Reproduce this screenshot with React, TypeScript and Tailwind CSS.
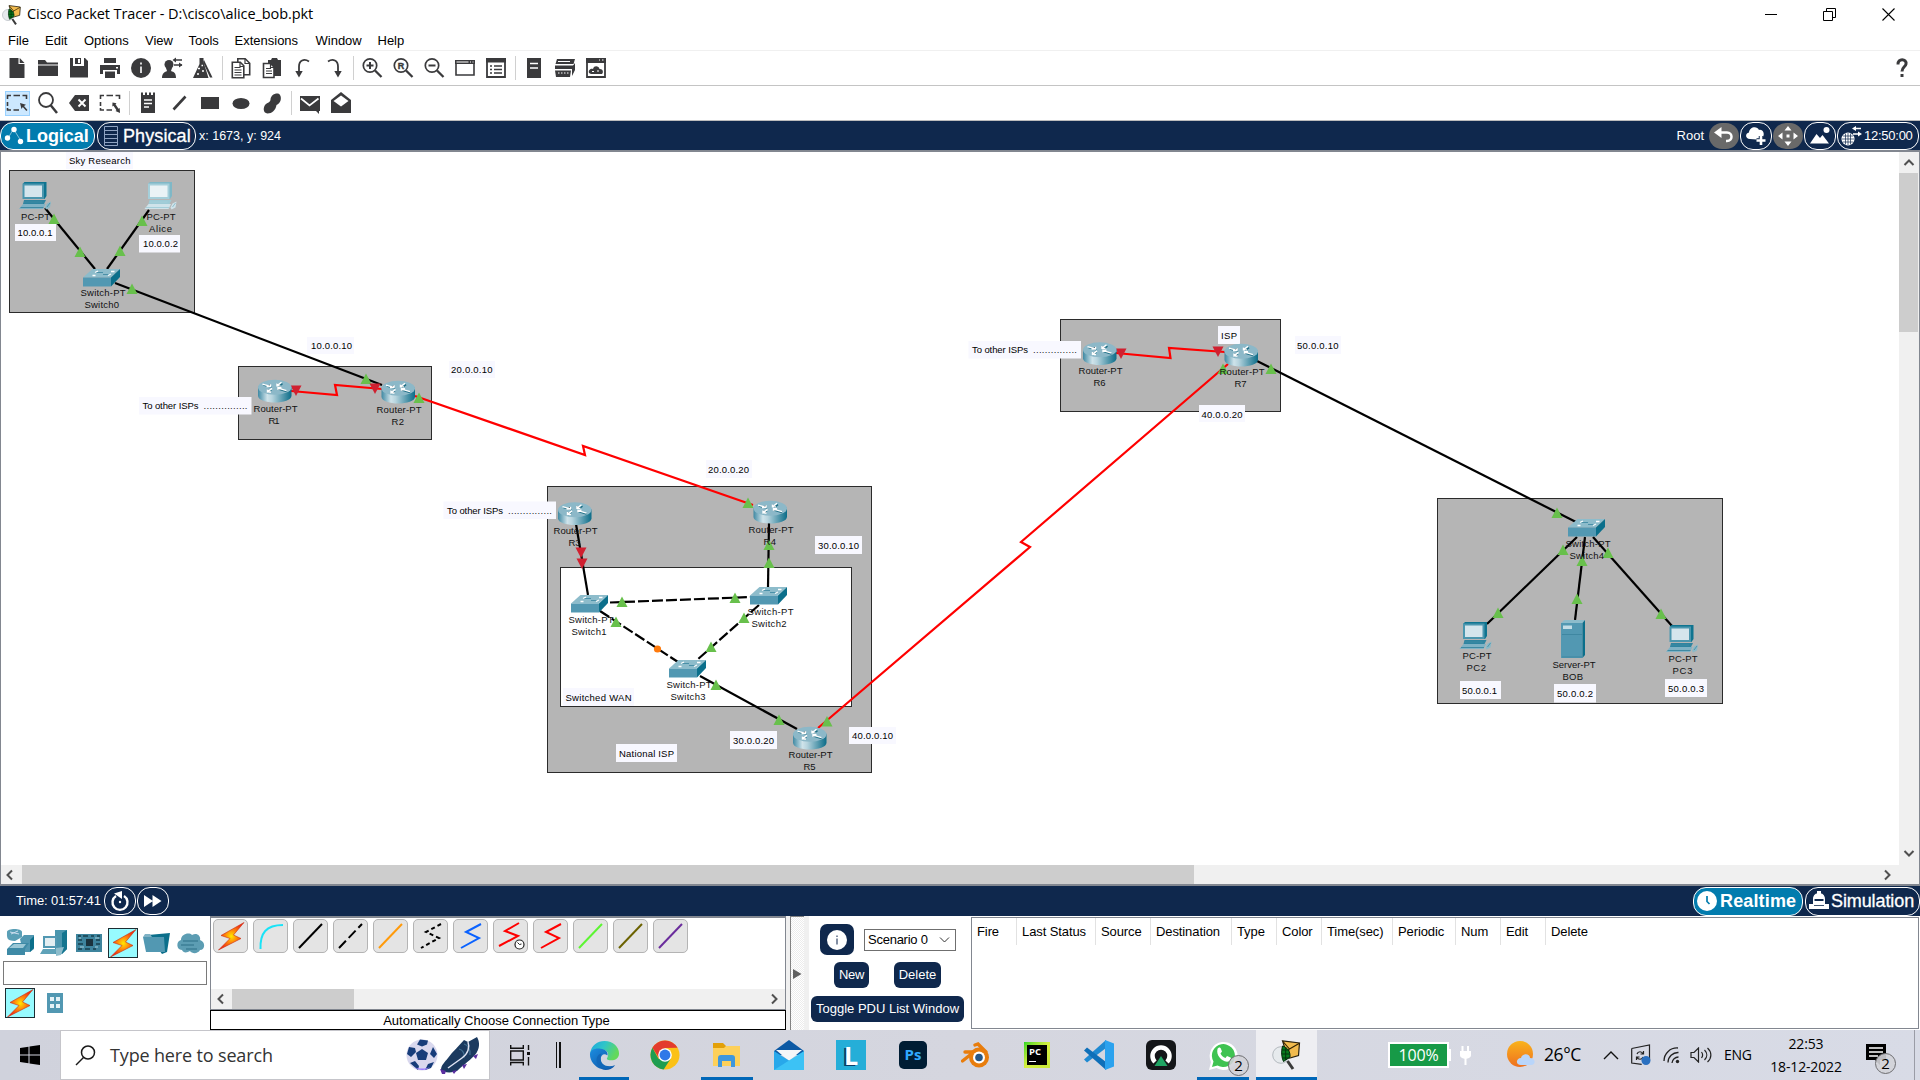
import React from "react";

const INK = "#3a3a3c";
const NAVY = "#0f284d";

/* ---------- small helpers ---------- */
type Kids = { children?: React.ReactNode };
const Ic = ({ children, w = 24, h = 24, box }: Kids & { w?: number; h?: number; box?: string }) => (
  <svg width={w} height={h} viewBox={box ?? `0 0 ${w} ${h}`} className="block shrink-0" fill="none">
    {children}
  </svg>
);
const Tool = ({ children, on }: Kids & { on?: boolean }) => (
  <div className="flex w-[31px] shrink-0 items-center justify-center">
    <div className={on ? "flex h-[25px] w-[25px] items-center justify-center border border-[#99d1ff] bg-[#cce8ff]" : ""}>{children}</div>
  </div>
);
const Sep = () => (
  <div className="flex w-[7px] shrink-0 justify-center">
    <div className="h-6 w-px bg-[#d0d0d0]" />
  </div>
);

/* ---------- toolbar icons ---------- */
const Mag = ({ inner }: { inner: string }) => (
  <Ic>
    <circle cx="10" cy="9.5" r="6.7" stroke={INK} strokeWidth="1.7" />
    <path d="M15 14.5l6.5 6.5" stroke={INK} strokeWidth="2.3" />
    {inner === "R" ? (
      <text x="10" y="12.8" textAnchor="middle" fontSize="9" fontWeight="700" fill={INK} stroke={INK} strokeWidth=".4" fontFamily="Liberation Sans, sans-serif">R</text>
    ) : (
      <path d={inner} stroke={INK} strokeWidth="2" />
    )}
  </Ic>
);
const topIcons: React.ReactNode[] = [
  <Ic><path d="M5 2h9v6h6v14H5z" fill={INK} transform="translate(-.5 0)" /><path d="M14.7 2l4.8 5h-4.8z" fill={INK} /></Ic>,
  <Ic><path d="M2 4h7l2 2.5h11v2H2zM2 9.5h20V20H2z" fill={INK} /></Ic>,
  <Ic><path d="M3 2h3v8h11V2h1l3 3v16.500H3z" fill={INK} /><path d="M8 2h6v6H8z" fill={INK} /><path d="M11 3h2v4h-2z" fill="#fff" /></Ic>,
  <Ic><path d="M6 2h12v5H6zM2 9h20v9h-3v-4H5v4H2zM7 15.500h10V22H7z" fill={INK} /><path d="M18 11h2v1.500h-2z" fill="#fff" /></Ic>,
  <Ic><circle cx="12" cy="12" r="10" fill={INK} /><path d="M12 10.500v6.500M12 6.500v2" stroke="#fff" strokeWidth="1.600" /></Ic>,
  <Ic><circle cx="9" cy="8.500" r="4.500" fill={INK} /><path d="M2 22c0-5 3-6 5-7l-1-3h6l-1 3c3 1 5 2 5 7z" fill={INK} /><path d="M14 4h8M14 9h8" stroke={INK} strokeWidth="1.500" /><path d="M16 1.500v5L12.500 4zM19 6.500v5l3.500-2.500z" fill={INK} /></Ic>,
  <Ic><path d="M8.500 2h4v4l5 16H2L8.500 8z" fill={INK} /><path d="M13 4l8.500 17.500H19L12 6z" fill={INK} /><path d="M7 12.500h2M11 15h2M6 18h2M10.500 9.500h1.500" stroke="#fff" strokeWidth="1.600" /></Ic>,
  null,
  <Ic><path d="M8.800 2.800h7.400l4.500 4.500v11.400H8.800z" stroke={INK} strokeWidth="1.600" /><path d="M3.300 6.300h8l3.500 3.500v12H3.300z" stroke={INK} fill="#fff" strokeWidth="1.600" /><path d="M5.500 11.500h6M5.500 14h7M5.500 16.500h7M5.500 19h7M11 6.500v4h4M16 3v4.500h4.500" stroke={INK} strokeWidth="1.200" /></Ic>,
  <Ic><path d="M8 4h3l1-2h5l1 2h3v16H8z" fill={INK} /><path d="M3.500 7.500h7l3.500 3.500v10.500H3.500z" stroke={INK} fill="#fff" strokeWidth="1.600" /><path d="M6 12.500h5M6 15h6M6 17.500h6M10.500 7.500v4h4" stroke={INK} strokeWidth="1.200" /></Ic>,
  <Ic><path d="M18 5.500c-5-3.500-10-1-10 5v6" stroke={INK} strokeWidth="1.800" /><path d="M4.300 15h7.400L8 21.500z" fill={INK} /></Ic>,
  <Ic><path d="M6 5.500c5-3.500 10-1 10 5v6" stroke={INK} strokeWidth="1.800" /><path d="M12.300 15h7.400L16 21.500z" fill={INK} /></Ic>,
  null,
  <Mag inner="M6.500 9.500h7M10 6v7" />,
  <Mag inner="R" />,
  <Mag inner="M6.500 9.500h7" />,
  <Ic><path d="M3 5h18v14H3z" stroke={INK} strokeWidth="1.600" /><path d="M2 4h20v4H2z" fill={INK} /><path d="M3.500 6h12M17 6h1M19.500 6h1" stroke="#fff" strokeWidth="1" /></Ic>,
  <Ic><path d="M3 3h18v18H3z" stroke={INK} strokeWidth="1.800" /><path d="M2 2h20v4.500H2z" fill={INK} /><path d="M6 10h2M10 10h8M6 13.500h2M10 13.500h8M6 17h2M10 17h8" stroke={INK} strokeWidth="1.700" /></Ic>,
  null,
  <Ic><path d="M5 2h14v20H5z" fill={INK} /><path d="M8 7.500h8M8 12h8" stroke="#fff" strokeWidth="1.500" /></Ic>,
  <Ic><path d="M4 3h18l-1.500 5H2.500z" fill={INK} /><path d="M2 9.500h19v3.500H2z" fill={INK} /><path d="M2 14.500h16l-1 6.500H3zM19 11l3-4v7l-3 6z" fill={INK} /><path d="M5 5.500h12M5 17h1.500M8 17h1.500M11 17h1.500M14 17h1.500" stroke="#fff" strokeWidth="1" /></Ic>,
  <Ic><path d="M3 3h18v18H3z" stroke={INK} strokeWidth="1.800" /><path d="M2 2h20v5H2z" fill={INK} /><path d="M15 4h1M18 4h1.500" stroke="#fff" strokeWidth="1.200" /><path d="M5 17c-1-3 2-5 4-4 1-4 6-3 6.500 0 3-.5 4.500 3 2.500 5H7z" fill={INK} /><path d="M8 15.500h2M13 15h2" stroke="#fff" /></Ic>,
];
const Marquee = ({ arrow }: { arrow: string }) => (
  <Ic>
    <path d="M2.500 8V4.500H6M8.500 4.500H15M17.500 4.500h4V8M2.500 11v4M2.500 17v2H6M8.500 19H14" stroke={INK} strokeWidth="1.600" />
    <path d={arrow} fill={INK} />
  </Ic>
);
const lowIcons: React.ReactNode[] = [
  <Marquee arrow="M15 12l6 1.800-2 1.200 3.500 4-1.200 1-3.500-4-1.300 2z" />,
  <Ic><circle cx="10" cy="9" r="7" stroke={INK} strokeWidth="1.800" /><path d="M14.500 14l6.500 8" stroke={INK} strokeWidth="2.500" /></Ic>,
  <Ic><path d="M2 12l6-8h14v16H8z" fill={INK} /><path d="M11.500 8.500l7 7M18.500 8.500l-7 7" stroke="#fff" strokeWidth="1.900" /></Ic>,
  <Marquee arrow="M14.500 11.500l4 .8-1 1 3 4.500 1.200-.8.3 5-4.500-2 1-.8-3-4.500-1.200.8z" />,
  null,
  <Ic><path d="M5 4h14v18H5zM5 1.500h2V5H5zM9 1.500h2V5H9zM13 1.500h2V5h-2zM17 1.500h2V5h-2z" fill={INK} /><path d="M8 9h8M8 12.500h8M8 16h5" stroke="#fff" strokeWidth="1.500" /></Ic>,
  <Ic><path d="M6.500 18.500l12-13" stroke={INK} strokeWidth="2.600" /></Ic>,
  <Ic><path d="M3 6h18v12H3z" fill={INK} /></Ic>,
  <Ic><ellipse cx="12" cy="12.500" rx="8.500" ry="5.500" fill={INK} /></Ic>,
  <Ic><path d="M10.500 8.500C11 3 18 1 20 4c2 3.500.5 8.500-3.500 10C15.500 19.500 12 22.500 7.500 22.500 2.500 22 3 15.500 6 13c2-1.500 4.200-1.500 4.500-4.500z" fill={INK} /></Ic>,
  null,
  <Ic><path d="M2 5h20v15H2z" fill={INK} /><path d="M3 7.500l8.500 7 9-7" stroke="#fff" strokeWidth="1.700" /><path d="M17 17h4v6l-3-3z" fill={INK} /></Ic>,
  <Ic><path d="M2 9l10-8 10 8v13H2z" fill={INK} /><path d="M4.500 10L12 4.500 19.500 10 12 15.500z" fill="#fff" /></Ic>,
];

/* ---------- network diagram ---------- */
const Router = ({ x, y }: { x: number; y: number }) => (
  <g transform={`translate(${x} ${y + 0.7})`}>
    <path d="M0 7v9c0 9 33.500 9 33.500 0V7z" fill="url(#cyl)" />
    <ellipse cx="16.750" cy="7.500" rx="16.750" ry="7.500" fill="#8cb8c8" />
    <g stroke="#1f6f86" strokeWidth="1.600" transform="translate(.5 .9)"><path d="M5 4.500l8 2.200M20 6l4-3M13 9l-4 3M20 8.500l8 2.300" /></g>
    <g stroke="#fff" strokeWidth="1.400"><path d="M4.500 4.500l8 2.200M12.500 4.500v2.300h-4M19 6l4.500-3.500M19 3.800v2.400h3.500M14 8.700l-4.500 3.500M9.500 9.800v2.500h3.500M20 8.500l8.500 2.500M23.500 8H20v2" /></g>
  </g>
);
const Switch = ({ x, y }: { x: number; y: number }) => (
  <g transform={`translate(${x} ${y})`}>
    <path d="M0 8.500L9.500 0H37l-9.500 8.500z" fill="#8dbccb" />
    <path d="M0 8.500h28v9H0z" fill="#5298b2" />
    <path d="M28 8.500L37 0v8l-9 9.500z" fill="#0b6f8b" />
    <path d="M12 3.500h8M20 5.500h8" stroke="#4a90a8" strokeWidth="1" />
    <path d="M12 3.500l3-1.500M28 2.500h3.500M9.500 6.500h3M25 6.500l3-1.500" stroke="#fff" strokeWidth="1.300" />
  </g>
);
const Pc = ({ x, y, pale }: { x: number; y: number; pale?: boolean }) => (
  <g transform={`translate(${x} ${y})`}>
    <path d="M4 1.500L5.500 0h22v14l-2 3H4z" fill={pale ? "#7fb8c7" : "#0f7490"} />
    <path d="M3.500 1.500h21.500V17H3.500z" fill={pale ? "#a5cfda" : "#4b96ae"} />
    <path d="M5.500 3.500h17.500v11.500H5.500z" fill={pale ? "#eaf3f6" : "#d5e5ec"} />
    <path d="M5 18h22l-2 4H4z" fill={pale ? "#9ecbd6" : "#2f84a0"} />
    <path d="M4 22h22.500L24 27H0z" fill={pale ? "#cfe3ea" : "#7fb2c5"} />
    <path d="M1.500 25.500h23M5 20h18" stroke={pale ? "#a5cfda" : "#3e8aa3"} strokeWidth="1" />
    <path d="M26 25.500l2-4 4-2-1 6-4 2z" fill={pale ? "#cfe3ea" : "#8ab9c8"} />
    <path d="M28 25l3-4" stroke={pale ? "#8fc0cd" : "#4f95ab"} />
  </g>
);
const Server = ({ x, y }: { x: number; y: number }) => (
  <g transform={`translate(${x} ${y})`}>
    <path d="M0 3l3.500-3H24l-2.500 3z" fill="#8dbccb" />
    <path d="M0 3h21.500v35H0z" fill="#5298b2" />
    <path d="M21.500 3L24 0v35l-2.500 3z" fill="#0b6f8b" />
    <path d="M2 5.500h9v3.500H2z" fill="#c3dde6" />
    <path d="M1 14.500h20M1 37h20" stroke="#3f87a1" />
  </g>
);

const zones = [
  [9.5, 170.5, 185, 142], [238.5, 366.5, 193, 73], [547.5, 486.5, 324, 286],
  [1060.5, 319.5, 220, 92], [1437.5, 498.5, 285, 205],
];
type Note = [number, number, number, number, string, number, number, number];
/* left, top, width, height, text, text-left, baseline, text-width */
const notes: Note[] = [
  [66, 152, 67, 17, "Sky Research", 69, 164, 61.5],
  [15, 224, 41, 17, "10.0.0.1", 17.5, 236, 35],
  [139, 235, 41, 17.5, "10.0.0.2", 143, 247, 35],
  [307, 337, 47, 17, "10.0.0.10", 311, 349, 41],
  [449, 361, 46, 17, "20.0.0.10", 451, 373, 41.5],
  [706, 460, 46, 18, "20.0.0.20", 708, 473, 41],
  [815, 536, 47, 18, "30.0.0.10", 818, 549, 41],
  [563, 688, 71, 18, "Switched WAN", 565.5, 701, 66],
  [730, 731, 47, 18, "30.0.0.20", 733, 744, 41],
  [849, 727, 47, 17, "40.0.0.10", 852, 739, 41],
  [616, 744, 61, 18, "National ISP", 619, 757, 55],
  [1218, 326, 22, 18, "ISP", 1221, 339, 16],
  [1295, 336, 46, 18, "50.0.0.10", 1297, 349, 41.5],
  [1199, 405, 46, 17, "40.0.0.20", 1201.5, 418, 41],
  [1460, 681, 41, 18, "50.0.0.1", 1462, 694, 35],
  [1554, 684, 42, 18.5, "50.0.0.2", 1557, 697, 36],
  [1665, 679, 42, 18, "50.0.0.3", 1668, 692, 36],
];
const ispNotes = [[139, 397], [443.5, 501.5], [968.5, 341]];
type Lab = [string, number, number, number];
const labels: Lab[] = [
  ["PC-PT", 21, 220, 29], ["PC-PT", 146.5, 220, 29], ["Alice", 149, 232, 23],
  ["Switch-PT", 80.5, 296, 45], ["Switch0", 84.5, 308, 34.5],
  ["Router-PT", 253.5, 412, 44], ["R1", 268.5, 424, 11],
  ["Router-PT", 376.5, 413, 45], ["R2", 391.5, 425, 12.5],
  ["Router-PT", 553.5, 534, 44], ["R3", 568.5, 546, 12],
  ["Router-PT", 748.5, 533, 45], ["R4", 763.5, 545, 12.5],
  ["Router-PT", 788.5, 758, 44], ["R5", 803.5, 770, 12],
  ["Router-PT", 1078.5, 374, 44], ["R6", 1093.5, 386, 12],
  ["Router-PT", 1219.5, 375, 45], ["R7", 1234.5, 387, 12],
  ["Switch-PT", 568.5, 623, 45], ["Switch1", 571.5, 635, 35],
  ["Switch-PT", 747.5, 615, 46], ["Switch2", 751.5, 627, 35],
  ["Switch-PT", 666.5, 688, 45], ["Switch3", 670.5, 700, 35],
  ["Switch-PT", 1565.5, 547, 45], ["Switch4", 1569.5, 559, 34.5],
  ["PC-PT", 1462.5, 659, 29], ["PC2", 1466.5, 671, 19.5],
  ["Server-PT", 1552.5, 668, 43], ["BOB", 1562.5, 680, 20.5],
  ["PC-PT", 1668.5, 662, 29], ["PC3", 1672.5, 674, 20],
];
const wires = [
  "M45 208L95 269", "M149 210L107 269", "M115 283L382 385", "M576 524L588 595", "M769 523L768 587",
  "M700 676L797 729", "M1257 361L1576 522", "M1577 537L1487 624", "M1585 537L1575 620", "M1593 537L1672 626",
];
const dashed = ["M610 602.500L752 597", "M600 611L678 662", "M759 605L697 660"];
const serial = [
  "M291 391L337 395L335 385L382 389", "M415 396L585 455L583 446L753 505",
  "M818 728L1030 547L1021 542L1228 364", "M1116 353L1170.500 358L1169 348L1225 352",
];
const up = [
  [54, 219], [80, 252], [142, 221], [120, 251], [132, 289], [366, 379], [419, 398], [748, 503], [769, 545], [769, 563],
  [622, 602], [735, 598], [616, 622], [744, 618], [711, 647], [716, 685], [779, 720], [827, 721.5], [1223, 369],
  [1271, 369], [1557, 513], [1563, 550], [1498, 613], [1582, 561], [1577, 599], [1608, 553], [1661, 614],
];
const down = [[296, 390], [375, 388], [581, 552], [582, 563], [1121, 353], [1218, 351]];

const Diagram = () => (
  <svg width="1898" height="713" viewBox="1 152 1898 713" className="block" fontFamily="Liberation Sans, Arial, sans-serif" fontSize="9.5">
    <defs>
      <linearGradient id="cyl">
        <stop offset="0" stopColor="#3f89a3" /><stop offset=".28" stopColor="#cfe3ea" /><stop offset=".42" stopColor="#b7d4de" /><stop offset="1" stopColor="#0b6c88" />
      </linearGradient>
    </defs>
    {zones.map(([x, y, w, h]) => <rect key={x} x={x} y={y} width={w} height={h} fill="#b5b5b5" stroke="#2b2b2b" />)}
    <rect x="560.5" y="567.5" width="291" height="139" fill="#fff" stroke="#2b2b2b" />
    {notes.map(([x, y, w, h, t, tx, ty, tw]) => (
      <g key={t}>
        <rect x={x} y={y} width={w} height={h} fill="#f8f8ff" />
        <text x={tx} y={ty} textLength={tw} fill="#000">{t}</text>
      </g>
    ))}
    {ispNotes.map(([x, y]) => (
      <g key={x}>
        <rect x={x} y={y} width="112.5" height="17.5" fill="#f8f8ff" />
        <text x={x + 3.5} y={y + 12} textLength="56">To other ISPs</text>
        <text x={x + 64.5} y={y + 12} textLength="44" fill="#222">...............</text>
      </g>
    ))}
    <g stroke="#000" strokeWidth="2.200" fill="none">
      {wires.map((d) => <path key={d} d={d} />)}
      {dashed.map((d) => <path key={d} d={d} strokeDasharray="11 3" />)}
    </g>
    <g stroke="#f00" strokeWidth="2.200" fill="none">{serial.map((d) => <path key={d} d={d} />)}</g>
    {up.map(([x, y], i) => <path key={i} d={`M${x} ${y - 5.5}l5.500 10.500h-11z`} fill="#68c04c" />)}
    {down.map(([x, y], i) => <path key={i} d={`M${x - 5.5} ${y - 4.5}h11l-5.500 10.500z`} fill="#d02030" />)}
    <circle cx="657.5" cy="649" r="3.600" fill="#ff7a0c" />
    <Pc x={19} y={182} /><Pc x={144.500} y={182} pale />
    <Pc x={1459.5} y={622} /><Pc x={1666} y={625} />
    <Server x={1561} y={620} />
    <Switch x={83} y={269} /><Switch x={571} y={595} /><Switch x={750} y={587} /><Switch x={669} y={660} /><Switch x={1568} y={519} />
    <Router x={258} y={379} /><Router x={381.5} y={380} /><Router x={558} y={501.5} /><Router x={753.5} y={500} /><Router x={793} y={726} />
    <Router x={1083} y={341.5} /><Router x={1224.5} y={343} />
    <g fill="#111">{labels.map(([t, x, y, w], i) => <text key={i} x={x} y={y} textLength={w}>{t}</text>)}</g>
  </svg>
);

/* ---------- scroll arrows ---------- */
const Chev = ({ d }: { d: string }) => (
  <Ic w={12} h={12}><path d={d} stroke="#505050" strokeWidth="2" /></Ic>
);
const LEFT = "M8 1.500L3.500 6L8 10.500", RIGHT = "M4 1.500L8.500 6L4 10.500", UP = "M1.500 8L6 3.500L10.500 8", DOWN = "M1.500 4L6 8.500L10.500 4";

/* ---------- bottom panel ---------- */
const Bolt = () => (
  <Ic w={28} h={30}>
    <defs><radialGradient id="bolt"><stop offset="0" stopColor="#ffe900" /><stop offset=".45" stopColor="#ff8a0a" /><stop offset="1" stopColor="#f03010" /></radialGradient></defs>
    <path d="M27 1.500L4 14.500l9 3L1.500 29 24 17.500l-7.500-3.500z" fill="url(#bolt)" stroke="#c92a12" strokeWidth=".6" />
  </Ic>
);
const BoltBox = () => <div className="flex h-[30px] w-[30px] items-center justify-center border border-[#1c2d33] bg-[#97fbff]"><Bolt /></div>;
const stroke = (d: string, c: string, dash?: string) => (
  <Ic w={28} h={30}><path d={d} stroke={c} strokeWidth="2" strokeDasharray={dash} /></Ic>
);
const DIAG = "M2 27L25 3", ZIG = "M24 3L9 11L22 17L4 27";
const cables: React.ReactNode[] = [
  <Bolt />,
  stroke("M3.500 28C3 12 9 4 26 4", "#19e3f7"),
  stroke(DIAG, "#000"),
  stroke(DIAG, "#000", "10 4"),
  stroke(DIAG, "#ff9a0a"),
  stroke(ZIG, "#000", "4 3"),
  stroke(ZIG, "#0a62ff"),
  <Ic w={28} h={30}><path d="M22 2L8 10L21 15L2 25" stroke="#f00" strokeWidth="2" /><circle cx="22.500" cy="23.500" r="4.500" fill="#fff" stroke="#222" strokeWidth="1.200" /><path d="M20.500 21.500l2 2 2-.5" stroke="#222" /></Ic>,
  stroke(ZIG, "#f00"),
  stroke(DIAG, "#5cf532"),
  stroke(DIAG, "#6b6200"),
  stroke(DIAG, "#6a2c9c"),
];
const Btn = ({ children, cls }: Kids & { cls: string }) => (
  <div className={`flex h-[26px] items-center justify-center rounded-[6px] bg-[#0f284d] text-[13px] text-white ${cls}`}>{children}</div>
);
const heads: [string, string][] = [
  ["Fire", "w-[45px]"], ["Last Status", "w-[79px]"], ["Source", "w-[55px]"], ["Destination", "w-[81px]"], ["Type", "w-[45px]"],
  ["Color", "w-[45px]"], ["Time(sec)", "w-[71px]"], ["Periodic", "w-[63px]"], ["Num", "w-[45px]"], ["Edit", "w-[45px]"], ["Delete", "w-[60px]"],
];

/* ---------- app mark ---------- */
const AppMark = ({ s }: { s: number }) => (
  <Ic w={s} h={s} box="0 0 30 30">
    <path d="M10.500.8L27.500 3l-1 12.500-10.500 3z" fill="#f2bb4e" stroke="#2a2210" strokeWidth="1.200" />
    <path d="M11 1.500l6.500 7.500L27 3.500M17 9l-1 8" stroke="#332200" strokeWidth="1.100" />
    <circle cx="9" cy="15" r="8.300" fill="#e6eaed" stroke="#b4babf" />
    <path d="M10.500 6c5 1.500 8 5.500 7.500 11l-6.500 4.500c-2-4-2.500-10-1-15.500z" fill="#067a1c" stroke="#032a0a" />
    <path d="M10 10h7M9.500 14h8.500M10.500 18h6.500M13.700 7.500v12.500" stroke="#03330c" />
    <path d="M15.500 21l5.500 8" stroke="#3a3a3a" strokeWidth="3" />
  </Ic>
);

/* ---------- taskbar ---------- */
const Task = ({ children, w, open, on }: Kids & { w: string; open?: boolean; on?: boolean }) => (
  <div className={`relative flex h-[50px] shrink-0 items-center justify-center ${w} ${on ? "bg-[#eeeef2]" : ""}`}>
    {children}
    {open && <div className={`absolute bottom-0 h-[3px] bg-[#0067b8] ${on ? "inset-x-0" : "inset-x-[5px]"}`} />}
  </div>
);
const Badge = ({ cls }: { cls: string }) => (
  <div className={`absolute flex h-[21px] w-[21px] items-center justify-center rounded-full border border-[#6d6d70] bg-[#d3d3d8]/90 text-[15px] font-medium leading-none text-black ${cls}`}>2</div>
);
const UI = "font-['Open_Sans','Noto_Sans',sans-serif]";

export default function App() {
  return (
    <div className="flex h-[1080px] w-[1920px] flex-col overflow-hidden bg-white font-['Liberation_Sans',Arial,sans-serif] text-[13px] text-black">
      {/* title bar */}
      <div className="flex h-[30px] shrink-0 items-center">
        <div className="flex w-[27px] justify-center pr-1"><AppMark s={20} /></div>
        <div className={`${UI} pb-px text-[14.5px] leading-none tracking-[-0.08px]`}>Cisco Packet Tracer - D:\cisco\alice_bob.pkt</div>
        <div className="ml-auto flex items-center pb-[2px] pr-[25px]">
          <Ic w={13} h={13}><path d="M0 6.500h12" stroke="#000" /></Ic>
          <div className="ml-[45px] mr-[46px]"><Ic w={13} h={13}><path d="M.5 3.500h9v9h-9zM3.500 3.500v-3h9v9h-3" stroke="#000" /></Ic></div>
          <Ic w={13} h={13}><path d="M.5.5l12 12M12.500.5l-12 12" stroke="#000" strokeWidth="1.100" /></Ic>
        </div>
      </div>
      {/* menu */}
      <div className="flex h-[21px] shrink-0 items-center border-b border-[#f0f0f0] pl-2 leading-none">
        <div className="w-[37px]">File</div><div className="w-[39px]">Edit</div><div className="w-[61px]">Options</div><div className="w-[43.500px]">View</div>
        <div className="w-[46px]">Tools</div><div className="w-[81px]">Extensions</div><div className="w-[62px]">Window</div><div>Help</div>
      </div>
      <div className="flex h-[35px] shrink-0 items-center border-b border-[#c4c4c4] pl-[1.5px]">
        {topIcons.map((n, i) => (n ? <Tool key={i}>{n}</Tool> : <Sep key={i} />))}
        <div className="ml-auto pr-[9px]">
          <Ic w={18} h={24}><path d="M5 8.500C4.500 2 14 2.500 13 8c-.5 3-4 3-4 7.500" stroke={INK} strokeWidth="3" /><path d="M7.500 18h3v3h-3z" fill={INK} /></Ic>
        </div>
      </div>
      <div className="flex h-[35px] shrink-0 items-center border-b border-[#bdbdbd] pl-[1.5px]">
        {lowIcons.map((n, i) => (n ? <Tool key={i} on={i === 0}>{n}</Tool> : <Sep key={i} />))}
      </div>
      {/* workspace bar */}
      <div className="flex h-[31px] shrink-0 items-center border-b-2 border-[#828790] bg-[#0f284d] text-white">
        <div className="flex h-[28px] w-[95px] shrink-0 items-center rounded-[13px] border border-white bg-[#027cae] pl-[3px] text-[18px] font-bold">
          <Ic w={20} h={22}><path d="M3.500 14L9.500 4L17 16" stroke="#d7edf5" strokeWidth="1" strokeOpacity=".6" /><circle cx="10" cy="4.500" r="2.700" fill="#fff" /><circle cx="3.500" cy="13" r="2.700" fill="#fff" /><circle cx="16.500" cy="16.500" r="2.700" fill="#fff" /></Ic>
          <span className="ml-[2px] pt-[2px] tracking-[-0.050px]">Logical</span>
        </div>
        <div className="ml-[2px] flex h-[28px] w-[99px] shrink-0 items-center rounded-[13px] border border-white pl-[6px] text-[18px]">
          <Ic w={14} h={20}><path d="M.5.5h13v19H.5zM1 4.500h12M1 8.500h12M1 12.500h12M1 16.500h12" stroke="#8fa3c2" /></Ic>
          <span className="ml-[5px] pt-[2px] tracking-[0.1px] [-webkit-text-stroke:0.3px_white]">Physical</span>
        </div>
        <div className="ml-[3px] pt-[2px] text-[12.500px]">x: 1673, y: 924</div>
        <div className="ml-auto flex items-center">
          <span className="mr-[5px] pt-px text-[13px]">Root</span>
          <div className="mr-px flex h-[26px] w-[30px] items-center justify-center rounded-[13px] bg-[#696969]">
            <Ic w={22} h={20}><path d="M5 6.500h9c6 0 6 8.500 0 8.500h-1" stroke="#fff" strokeWidth="2.500" /><path d="M1 6.500L8.500 1v11z" fill="#fff" /></Ic>
          </div>
          <div className="mr-px flex h-[28px] w-[32px] items-center justify-center rounded-[13px] border border-white">
            <Ic w={22} h={22}><path d="M5 14c-5 0-5-6-1-6.500C4 2 12 0 14 5c4-1 6 4 4 7v3z" fill="#fff" /><path d="M16 11v9M11.500 15.500h9" stroke={NAVY} strokeWidth="4.500" /><path d="M16 11v9M11.500 15.500h9" stroke="#fff" strokeWidth="2.600" /></Ic>
          </div>
          <div className="mr-px flex h-[26px] w-[30px] items-center justify-center rounded-[13px] bg-[#696969]">
            <Ic w={20} h={20}><path d="M10 0l3.500 4.500h-7zM10 20l3.500-4.500h-7zM0 10l4.500-3.500v7zM20 10l-4.500-3.500v7zM8.500 8.500h3v3h-3z" fill="#fff" /></Ic>
          </div>
          <div className="mr-px flex h-[28px] w-[32px] items-center justify-center rounded-[13px] border border-white">
            <Ic w={20} h={18}><path d="M0 16.500L6.500 7l3.500 4 2.500-3 6.500 8.500z" fill="#fff" /><circle cx="16.500" cy="3" r="3" fill="#fff" /></Ic>
          </div>
          <div className="mr-px flex h-[28px] w-[82px] items-center rounded-[13px] border border-white pl-[3px] text-[13px]">
            <Ic w={22} h={22}><circle cx="7" cy="14" r="6.500" fill="#fff" /><path d="M1 14h12M7 8v12M2 11h10M2 17h10M4.500 8.500v11M9.500 8.500v11" stroke={NAVY} strokeWidth=".7" /><path d="M13 3.500h7M12 9h7" stroke="#fff" strokeWidth="1.500" /><path d="M15 1v5l-4-2.500zM17 6.500v5l4-2.500z" fill="#fff" /></Ic>
            <span className="ml-px pt-px tracking-[-0.25px]">12:50:00</span>
          </div>
        </div>
      </div>
      {/* canvas */}
      <div className="flex h-[734px] shrink-0 flex-col border-x border-b-2 border-[#828790]">
        <div className="flex h-[713px]">
          <Diagram />
          <div className="flex w-5 flex-col items-center justify-between bg-[#f0f0f0] pb-[6px]">
            <div className="flex w-full flex-col items-center">
              <div className="flex h-[21px] items-center"><Chev d={UP} /></div>
              <div className="h-[159px] w-[19px] self-start bg-[#cdcdcd]" />
            </div>
            <Chev d={DOWN} />
          </div>
        </div>
        <div className="flex h-[19px] items-center bg-[#f0f0f0]">
          <div className="flex w-[21px] pl-[3px]"><Chev d={LEFT} /></div>
          <div className="h-[19px] w-[1172px] bg-[#cdcdcd]" />
          <div className="ml-auto mr-[26px]"><Chev d={RIGHT} /></div>
        </div>
      </div>
      {/* time bar */}
      <div className="flex h-[30px] shrink-0 items-center bg-[#0f284d] pl-[16px] text-[13px] text-white">
        <span className="w-[88px] tracking-[-0.1px]">Time: 01:57:41</span>
        <div className="flex h-[28px] w-[32px] items-center justify-center rounded-[13px] border border-white">
          <Ic w={20} h={22}><path d="M6 6a7.500 7.500 0 1 0 8 0" stroke="#fff" strokeWidth="2.400" /><path d="M4 3.500L12 1v8z" fill="#fff" /><circle cx="10" cy="12" r="1.200" fill="#fff" /></Ic>
        </div>
        <div className="ml-[1px] flex h-[28px] w-[32px] items-center justify-center rounded-[13px] border border-white">
          <Ic w={18} h={14}><path d="M0 1l9 6-9 6zM8.500 1l9 6-9 6z" fill="#fff" /></Ic>
        </div>
        <div className="ml-auto flex h-[29px] w-[110px] items-center rounded-[13px] border border-white bg-[#027cae] pl-[3px] text-[18px] font-bold">
          <Ic w={20} h={20}><circle cx="10" cy="10" r="10" fill="#fff" /><path d="M10 5v5.500l2.500 2.500" stroke="#027cae" strokeWidth="1.700" /></Ic>
          <span className="ml-[3px] tracking-[0.15px]">Realtime</span>
        </div>
        <div className="ml-[2px] flex h-[29px] w-[115px] items-center rounded-[13px] border border-white pl-[3px] text-[18px]">
          <Ic w={20} h={20}><path d="M4 8c0-8 12-8 12 0v5H4zM4 13h12v5H4zM0 13h4v5H0zM16 13h4v5h-4zM8 0h4v3H8z" fill="#fff" /><path d="M5.500 9h9" stroke={NAVY} strokeWidth="2" /><path d="M5 14.500h10" stroke={NAVY} strokeWidth=".8" /></Ic>
          <span className="ml-[2px] tracking-[-0.1px] [-webkit-text-stroke:0.3px_white]">Simulation</span>
        </div>
      </div>
      {/* device and PDU panels */}
      <div className="flex h-[114px] shrink-0 bg-[#f0f0f0]">
        <div className="w-[210px] shrink-0 bg-white">
          <div className="flex h-[42px] items-end gap-[5px] pl-[5px]">
            <Ic w={30} h={30}><path d="M2 4c0-4 15-4 15 0v5l-7 4c-9 0-8-4-8-9z" fill="#5a9fb6" /><path d="M5 4l9 2M13 3L6 6" stroke="#cde" /><path d="M15 11l4-4h10v14l-4 3h-7z" fill="#5298b2" /><path d="M2 21l6-6h16l-4 6v6H2z" fill="#3e8aa6" /><path d="M4 20l5-4h12l-3 4z" fill="#9cc8d6" /><path d="M25 12l4-4v12l-4 4z" fill="#0b6f8b" /></Ic>
            <Ic w={28} h={30}><path d="M15 2h12v19l-5 5h-7z" fill="#4b96ae" /><path d="M22 5l5-3v19l-5 5z" fill="#14758f" /><path d="M3 8h14v12H3z" fill="#5298b2" /><path d="M5 10h10v8H5z" fill="#e3eef2" /><path d="M3 21h14l-2 5H0z" fill="#5fa2b8" /><path d="M16 20l8-1-3 8-5 1z" fill="#8dbccb" /></Ic>
            <div className="ml-[2px]"><Ic w={28} h={30}><path d="M1 6h26v18H1z" fill="#3e849d" /><path d="M11 11h7v7h-7z" fill="#1b323c" /><path d="M3 8h3M8 8h5M16 8h3M22 8h3M3 12h4M3 16h5M3 21h4M10 21h5M18 21h3M21 12h4M21 16h4" stroke="#173f4d" strokeWidth="1.500" /><path d="M4 10h2M20 10h4M5 19h4M20 19h3" stroke="#a9d0dc" /></Ic></div>
            <BoltBox />
            <Ic w={28} h={30}><path d="M5 7l22-2-3 19-5 2z" fill="#0b6f8b" /><path d="M0 9h21l1 15H3z" fill="#5298b2" /><path d="M0 9l2-3h5l2 3z" fill="#7fb2c5" /></Ic>
            <div className="ml-[1px]"><Ic w={28} h={30}><path d="M5 22C-1 22-1 13 4 12 4 6 12 4 15 7c5-3 9 1 8 5 6 2 5 10 0 10-2 4-8 4-10 1-3 2-7 2-8-1z" fill="#5c9db3" /><path d="M6 13h15M4 17h13M9 21h11" stroke="#3c7f97" strokeWidth="1.500" /></Ic></div>
          </div>
          <div className="ml-[3px] mt-[3px] h-[24px] w-[204px] border-[1.500px] border-[#7a7a7a]" />
          <div className="mt-[3px] flex items-center gap-[11px] pl-[5px]">
            <BoltBox />
            <Ic w={18} h={22}><path d="M1 1h16v20H1z" fill="#5298b2" /><path d="M4 5h4v4H4zM10 5h4v4h-4zM4 12h4v4H4zM10 12h4v4h-4z" fill="#e6f2f6" /></Ic>
          </div>
        </div>
        <div className="flex w-[576px] shrink-0 flex-col">
          <div className="flex h-[94px] flex-col justify-between border-x border-t-2 border-b border-[#828790] bg-white">
            <div className="flex gap-[5px] pl-[2px] pt-[1px]">
              {cables.map((c, i) => (
                <div key={i} className="flex h-[34px] w-[35px] shrink-0 items-center justify-center rounded-[5px] border border-[#b4b4b4] bg-[#e4e4e4]">{c}</div>
              ))}
            </div>
            <div className="flex h-[20px] items-center bg-[#f0f0f0]">
              <div className="flex w-[21px] pl-[4px]"><Chev d={LEFT} /></div>
              <div className="h-[20px] w-[122px] bg-[#cdcdcd]" />
              <div className="ml-auto mr-[5px]"><Chev d={RIGHT} /></div>
            </div>
          </div>
          <div className="flex h-[20px] items-center justify-center border border-black bg-white pr-[3px] text-[13px] leading-none">Automatically Choose Connection Type</div>
        </div>
        <div className="ml-1 flex w-[14px] items-center border-l border-t border-[#828282] bg-[repeating-conic-gradient(#ffffff_0_25%,#ececec_0_50%)] bg-[size:2px_2px] pl-[2px]">
          <Ic w={9} h={10}><path d="M0 0l8.500 5L0 10z" fill="#606060" /></Ic>
        </div>
        <div className="ml-[5px] flex flex-col bg-white pl-[2px]">
          <div className="flex items-center pl-[9px] pt-[8px]">
            <div className="flex h-[31px] w-[34px] items-center justify-center rounded-[7px] bg-[#0f284d]">
              <Ic w={20} h={20}><circle cx="10" cy="10" r="10" fill="#fff" /><path d="M10 8.500v6M10 5.500v1.500" stroke="#5a6a85" strokeWidth="1.500" /></Ic>
            </div>
            <div className="ml-[10px] flex h-[22px] w-[92px] items-center border border-[#6f6f6f] pl-[3px] text-[13px] tracking-[-0.25px]">
              Scenario 0
              <span className="ml-auto mr-[5px]"><Ic w={11} h={8}><path d="M1 1.500l4.500 4.500L10 1.500" stroke="#333" /></Ic></span>
            </div>
          </div>
          <div className="mt-[7px] flex gap-[25px] pl-[23px]"><Btn cls="w-[35px] tracking-[-0.3px]">New</Btn><Btn cls="w-[47px]">Delete</Btn></div>
          <Btn cls="mt-[8px] w-[153px]">Toggle PDU List Window</Btn>
        </div>
        <div className="flex w-[7px] shrink-0 bg-white" />
        <div className="flex min-w-0 flex-1 flex-col bg-white pb-px pt-px">
          <div className="flex flex-1 border border-[#828790]">
            {heads.map(([t, w], i) => (
              <div key={t} className={`h-[27px] shrink-0 pl-[5px] pt-[4px] tracking-[-0.1px] ${w} ${i < 10 ? "border-r border-[#e2e2e2]" : ""}`}>{t}</div>
            ))}
          </div>
        </div>
        <div className="w-[1px] bg-white" />
      </div>
      {/* taskbar */}
      <div className={`flex h-[50px] shrink-0 items-center bg-gradient-to-r from-[#d0d2dc] via-[#d5d6df] to-[#d8dbe6] ${UI}`}>
        <Task w="w-[60px]"><Ic w={20} h={20}><path d="M0 3l8.500-1.200V9.500H0zM9.500 1.600L20 0v9.500H9.500zM0 10.500h8.500v7.700L0 17zM9.500 10.500H20V20L9.500 18.400z" fill="#000" /></Ic></Task>
        <div className="flex h-[50px] w-[430px] shrink-0 items-center border border-[#c5c5ca] bg-white pl-[14px]">
          <Ic w={21} h={21}><circle cx="13" cy="7.500" r="6.500" stroke="#1a1a1a" strokeWidth="1.500" /><path d="M8.500 12.500L1 20" stroke="#1a1a1a" strokeWidth="1.500" /></Ic>
          <span className="ml-[14px] whitespace-nowrap text-[18px] tracking-[-0.150px] text-[#333]">Type here to search</span>
          <div className="ml-auto mr-[9px] flex items-center">
            <Ic w={32} h={34}>
              <circle cx="16" cy="17" r="15.500" fill="#d9d8ee" />
              <path d="M16 11l6 4-2 7h-8l-2-7zM3 9l6 1 1 4-5 5-4-3zM14 1.500l8 1-1 4-5 2-5-2zM27 9l4 7-3 4-4-4zM4 25l5-2 4 5-1 4zM22 26l6-2-3 6-6 2z" fill="#173d7a" />
              <path d="M8 29c5 4 12 4 16 0-4 2-12 2-16 0z" fill="#9a7bff" />
            </Ic>
            <Ic w={42} h={38}>
              <path d="M26 4l4 2 9-5c3 5 3 12-2 18-7 7-14 12-18 16-4 2-14 2-16-1 0-5 4-8 7-12 5-7 11-12 16-18z" fill="#1b3a5f" />
              <path d="M26 8c4 1 7 6 6 11M21 13c4 1 6 5 5 9" stroke="#3f6d8f" strokeWidth="1.200" />
              <path d="M30 6c2 5 0 12-6 16L10 32" stroke="#dfe4f3" strokeWidth="1.500" />
              <path d="M2 33l2 5h3l1-3M14 35l2 3 3-4M24 29l2 4 3-5M35 20l3 3 2-5" fill="#5a2ea0" />
            </Ic>
          </div>
        </div>
        <Task w="w-[60px]"><Ic w={21} h={21}><path d="M.7 0v3.300h12.600V0M.7 6h12.600v9H.7zM.7 20.500v-3h12.600v3M18.500 0v5M18.500 12v8.500" stroke="#111" strokeWidth="1.400" /><path d="M17 7h3v3h-3z" fill="#111" /></Ic></Task>
        <div className="flex w-[24px] justify-center gap-[2px]"><div className="ml-[-8px] h-[26px] w-[1.500px] bg-[#111]" /><div className="h-[26px] w-[1.500px] bg-[#111]" /></div>
        <Task w="w-[60px]" open>
          <Ic w={31} h={31} box="0 0 32 32">
            <defs>
              <linearGradient id="eg" x1="0" y1="0" x2="1" y2=".4"><stop offset="0" stopColor="#1ba5e0" /><stop offset=".5" stopColor="#2fc5c9" /><stop offset="1" stopColor="#63d95b" /></linearGradient>
              <linearGradient id="eb" x1="0" y1="0" x2="1" y2="1"><stop offset="0" stopColor="#1c8de0" /><stop offset="1" stopColor="#0d4fa0" /></linearGradient>
            </defs>
            <path d="M1 15C2 5 9 1 16 1c9 0 15 6 15 13 0 5-4 7-8 7-5 0-5-2-4-3 2-4 0-7-4-8-6-1-12 1-14 5z" fill="url(#eg)" />
            <path d="M1 15c0-5 6-7 11-6 5 0 8 4 7 7-3-3-7-1-7 4 0 6 7 10 15 6-4 5-10 6-14 4C6 28 1 22 1 15z" fill="url(#eb)" />
            <path d="M12 19c0 6 6 10 15 7-8 6-17 4-19-3-1-5 2-9 5-9-1 2-1 3-1 5z" fill="#1267b8" />
          </Ic>
        </Task>
        <Task w="w-[62px]">
          <Ic w={30} h={30} box="0 0 32 32">
            <circle cx="16" cy="16" r="15.500" fill="#fbc116" />
            <path d="M2.600 8.200a15.500 15.500 0 0 0 12 23.200L22 20H9z" fill="#1f9d50" />
            <path d="M2.600 8.200L10 20l6-11.500 13.400-.3A15.500 15.500 0 0 0 2.600 8.200z" fill="#e33b2e" />
            <circle cx="16" cy="16" r="7.300" fill="#fff" /><circle cx="16" cy="16" r="5.800" fill="#2f78e8" />
          </Ic>
        </Task>
        <Task w="w-[62px]" open>
          <Ic w={28} h={26}><path d="M0 1h10l3 3v6H0z" fill="#e3a008" /><path d="M0 6h11l2-2h14v20H0z" fill="#fdd05a" /><path d="M5 25v-9c0-2 1-3 3-3h11c2 0 3 1 3 3v9h-4v-6H9v6z" fill="#3f97dd" /></Ic>
        </Task>
        <Task w="w-[62px]"><Ic w={30} h={30}><path d="M0 11L15 0l15 11v4H0z" fill="#0c59a4" /><path d="M2 10h26L15 21z" fill="#f5f6f8" /><path d="M0 11l30 19H0z" fill="#28a8ea" /><path d="M30 11L0 30h30z" fill="#3cc2f5" /></Ic></Task>
        <Task w="w-[62px]"><div className="flex h-[30px] w-[30px] items-center justify-center bg-[#25aed8] text-[25px] font-bold leading-none text-white [text-shadow:-2px_1px_0_#0b3d66]">L</div></Task>
        <Task w="w-[62px]"><div className="flex h-[28px] w-[28px] items-center justify-center rounded-[5px] bg-[#001d34] pb-[2px] text-[15px] font-bold leading-none text-[#31a8ff]">Ps</div></Task>
        <Task w="w-[62px]"><Ic w={29} h={26}><path d="M14 3l3-1 8 8M1.500 19L16 7.500M4 10h13" stroke="#e87d0d" strokeWidth="3.400" strokeLinecap="round" /><circle cx="18" cy="15.500" r="10" fill="#e87d0d" /><circle cx="18" cy="15.500" r="6" fill="#fff" /><circle cx="18" cy="15.500" r="3.800" fill="#265787" /></Ic></Task>
        <Task w="w-[62px]">
          <div className="flex h-[26px] w-[26px] items-center justify-center bg-gradient-to-br from-[#21d729] via-[#d6f040] to-[#c8e83a]">
            <div className="flex h-[20px] w-[20px] flex-col bg-black pl-[2px] pt-[2px] text-[9.500px] font-bold leading-none text-white">PC<div className="mt-[4px] h-[1.500px] w-[7px] bg-white" /></div>
          </div>
        </Task>
        <Task w="w-[62px]"><Ic w={30} h={30}><path d="M22 0L0 19.500l3 3L22 8z" fill="#1f8ad2" /><path d="M22 30L0 10.500l3-3L22 22z" fill="#0e6fb8" /><path d="M21 0l9 3.500v23L21 30z" fill="#2ba2ee" /></Ic></Task>
        <Task w="w-[62px]"><Ic w={30} h={30}><rect width="30" height="30" rx="6" fill="#141619" /><path d="M9 22a8.500 8.500 0 1 1 12 0" stroke="#fff" strokeWidth="4.500" /><path d="M15 16l6.500 10h-13z" fill="#1fa463" /></Ic></Task>
        <Task w="w-[62px]" open>
          <Ic w={30} h={31}><path d="M1 30l2-8A14 14 0 1 1 8.500 28z" fill="#fff" /><path d="M4 27l1.500-5.500A11.500 11.500 0 1 1 9.500 25.500z" fill="#3fc351" /><path d="M9.500 9c1-2 3-2 3.500 0l1 2.500-1.500 2c1 2 2.500 3.500 5 4.500l1.500-2 4 1.700c0 3-2 4-4 4C13 21 8 15 9.500 9z" fill="#fff" /></Ic>
          <Badge cls="right-[5px] top-[25px]" />
        </Task>
        <div className="ml-[2px]"><Task w="w-[61px]" open on><AppMark s={30} /></Task></div>
        {/* tray */}
        <div className="ml-[71px] flex h-[26px] w-[61px] shrink-0 items-center justify-center border-[2.500px] border-white bg-[#179a47] text-[16px] leading-none tracking-[-0.2px] text-white">100%</div>
        <div className="mr-[9px] h-[12px] w-[2px] bg-white" />
        <Ic w={11} h={19}><path d="M2.500 0v5M8 0v5M5.500 12v7" stroke="#fff" strokeWidth="2" /><path d="M0 5h11v4c0 5-11 5-11 0z" fill="#fff" /></Ic>
        <div className="ml-[36px]"><Ic w={28} h={31}><defs><linearGradient id="sun" x1="0" y1="0" x2="0" y2="1"><stop offset="0" stopColor="#f9b31c" /><stop offset="1" stopColor="#ee7020" /></linearGradient></defs><circle cx="13" cy="14" r="13" fill="url(#sun)" /><path d="M14 25c-6 0-5-7 0-7 1-5 9-5 9 0 6 0 6 7 1 7z" fill="#b9d5fa" /></Ic></div>
        <span className="ml-[9px] w-[59px] text-[17.500px] leading-none tracking-[-0.4px]">26°C</span>
        <Ic w={16} h={10}><path d="M1 9l7-7 7 7" stroke="#111" strokeWidth="1.400" /></Ic>
        <div className="ml-[12px]"><Ic w={20} h={22}><path d="M.7 4.500L18.500 1v15M.7 4.500V19l10 1.300" stroke="#222" strokeWidth="1.200" /><path d="M6 10c1-3 5-3 6 0M12.500 7v3h-3M12 13c-1 3-5 3-6 0M5.500 16v-3h3" stroke="#222" strokeWidth="1.200" /><circle cx="15" cy="16.500" r="4.500" fill="#2a70c0" /></Ic></div>
        <div className="ml-[12px]"><Ic w={17} h={18}><path d="M1 15A13 13 0 0 1 15 2M5 16.500A10 10 0 0 1 15.500 6.500M9 17A6.500 6.500 0 0 1 15.500 11" stroke="#222" strokeWidth="1.300" /><circle cx="14.500" cy="15.500" r="1.700" fill="#222" /></Ic></div>
        <div className="ml-[10px]"><Ic w={22} h={16}><path d="M1 5.500h3L8.500 1v14L4 10.500H1zM11.500 5c1.500 2 1.500 4 0 6M14.500 3c3 3 3 7 0 10M17.500 1c4.500 4 4.500 10 0 14" stroke="#222" strokeWidth="1.200" /></Ic></div>
        <span className="ml-[12px] w-[28px] text-[14px] leading-none tracking-[-0.3px]">ENG</span>
        <div className="ml-[14px] flex w-[80px] flex-col items-center gap-[8px] whitespace-nowrap text-[14px] leading-[15px] tracking-[-0.15px]"><span>22:53</span><span>18-12-2022</span></div>
        <div className="relative ml-[20px]">
          <Ic w={22} h={22}><path d="M0 0h20v16h-6v5l-5-5H0z" fill="#000" /><path d="M3 4h14M3 8h14M3 12h9" stroke="#fff" strokeWidth="1.400" /></Ic>
          <Badge cls="left-[9px] top-[9px]" />
        </div>
        <div className="ml-auto mr-[5px] h-[50px] w-px bg-[#9a9ca6]" />
      </div>
    </div>
  );
}
